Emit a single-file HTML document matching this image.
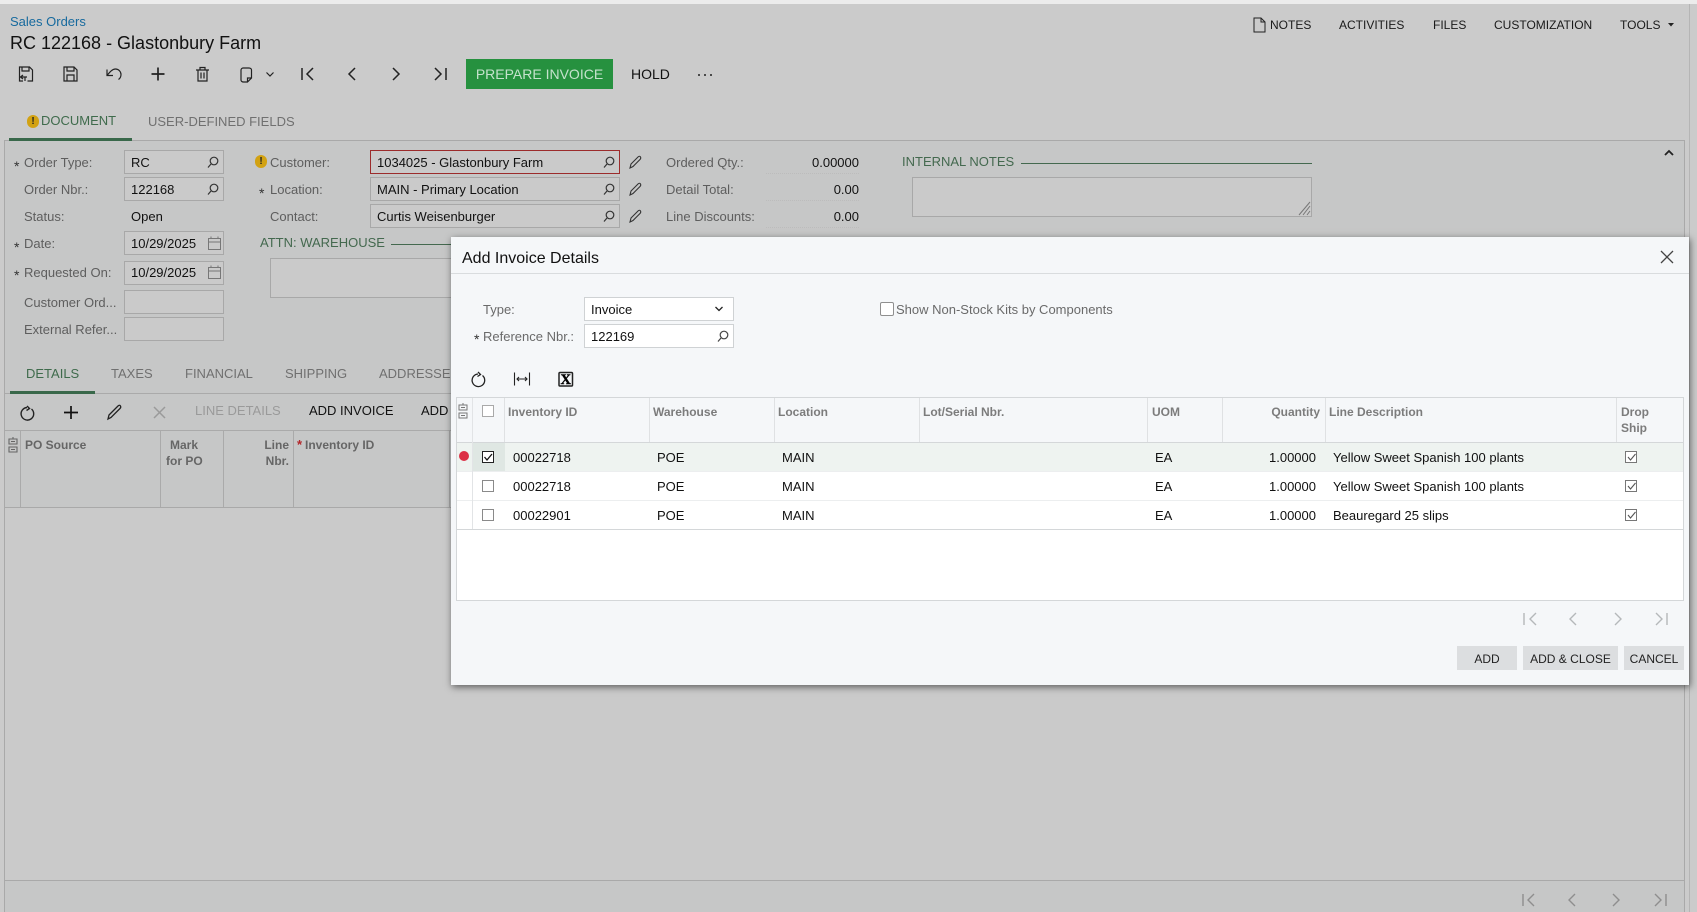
<!DOCTYPE html>
<html><head><meta charset="utf-8"><title>Sales Orders</title>
<style>
html,body{margin:0;padding:0;width:1697px;height:912px;overflow:hidden;background:#cbcbcb;font-family:"Liberation Sans",Arial,sans-serif;font-size:13px;color:#111}
.a{position:absolute;box-sizing:border-box}
.t{position:absolute;white-space:nowrap;line-height:16px}
.l{color:#5e5e5e}
.s{color:#333;font-size:14px}
.g{color:#44694f}
.n{color:#707070;font-size:13px}
.f{position:absolute;box-sizing:border-box;background:#cacaca;border:1px solid #a8a8a8}
.h{font-weight:bold;color:#666;font-size:12px}
.m{font-weight:bold;color:#7c7c7c;font-size:12px}
.tb{font-size:13px;color:#111}
.top{font-size:12px;color:#1a1a1a}
.v{color:#111}
.b{position:absolute;background:#dcdee0;top:646px;height:24px;line-height:26px;text-align:center;font-size:12px;color:#222}
svg{position:absolute;left:0;top:0;overflow:visible}
</style></head><body>
<div class="a" style="left:0;top:0;width:1697px;height:4px;background:#ececec"></div>
<div class="a" style="left:1689px;top:4px;width:1px;height:908px;background:#b5b5b5"></div>
<div class="a" style="left:4px;top:140px;width:1681px;height:772px;background:#c6c7c7;border-left:1px solid #a9a9a9;border-right:1px solid #a9a9a9;border-top:1px solid #a9a9a9"></div>
<div class="a" style="left:5px;top:507px;width:1679px;height:374px;background:#cacaca;border-top:1px solid #a9a9a9;border-bottom:1px solid #a9a9a9"></div>

<div class="t" style="left:10px;top:14px;color:#176a9e;font-size:13px">Sales Orders</div>
<div class="t" style="left:10px;top:33px;font-size:18px;line-height:20px;color:#111">RC 122168 - Glastonbury Farm</div>
<div class="a" style="left:466px;top:59px;width:147px;height:30px;background:#26913f;color:#c4e2cc;font-size:14px;line-height:30px;text-align:center">PREPARE INVOICE</div>
<div class="t" style="left:631px;top:66px;font-size:14px;color:#111">HOLD</div>

<div class="t top" style="left:1270px;top:17px">NOTES</div>
<div class="t top" style="left:1339px;top:17px">ACTIVITIES</div>
<div class="t top" style="left:1433px;top:17px">FILES</div>
<div class="t top" style="left:1494px;top:17px">CUSTOMIZATION</div>
<div class="t top" style="left:1620px;top:17px">TOOLS</div>

<div class="a" style="left:27px;top:115px;width:12px;height:13px;border-radius:6px;background:#d2a213;color:#222;font:bold 10px/13px 'Liberation Sans',sans-serif;text-align:center">!</div>
<div class="t" style="left:41px;top:113px;font-size:13px;color:#3f6b4c">DOCUMENT</div>
<div class="t n" style="left:148px;top:114px">USER-DEFINED FIELDS</div>
<div class="a" style="left:9px;top:138px;width:123px;height:3px;background:#39684a"></div>

<!-- form left -->
<div class="t l" style="left:24px;top:155px">Order Type:</div>
<div class="t l" style="left:24px;top:182px">Order Nbr.:</div>
<div class="t l" style="left:24px;top:209px">Status:</div>
<div class="t l" style="left:24px;top:236px">Date:</div>
<div class="t l" style="left:24px;top:265px">Requested On:</div>
<div class="t l" style="left:24px;top:295px">Customer Ord...</div>
<div class="t l" style="left:24px;top:322px">External Refer...</div>
<div class="t s" style="left:14px;top:158px">*</div>
<div class="t s" style="left:14px;top:239px">*</div>
<div class="t s" style="left:14px;top:267px">*</div>
<div class="f" style="left:124px;top:150px;width:100px;height:24px"></div>
<div class="f" style="left:124px;top:177px;width:100px;height:24px"></div>
<div class="f" style="left:124px;top:231px;width:100px;height:24px"></div>
<div class="f" style="left:124px;top:261px;width:100px;height:24px"></div>
<div class="f" style="left:124px;top:290px;width:100px;height:24px"></div>
<div class="f" style="left:124px;top:317px;width:100px;height:24px"></div>
<div class="t v" style="left:131px;top:155px">RC</div>
<div class="t v" style="left:131px;top:182px">122168</div>
<div class="t v" style="left:131px;top:209px">Open</div>
<div class="t v" style="left:131px;top:236px">10/29/2025</div>
<div class="t v" style="left:131px;top:265px">10/29/2025</div>

<!-- form middle -->
<div class="a" style="left:255px;top:155px;width:12px;height:13px;border-radius:6px;background:#d2a213;color:#222;font:bold 10px/13px 'Liberation Sans',sans-serif;text-align:center">!</div>
<div class="t l" style="left:270px;top:155px">Customer:</div>
<div class="t l" style="left:270px;top:182px">Location:</div>
<div class="t l" style="left:270px;top:209px">Contact:</div>
<div class="t s" style="left:259px;top:185px">*</div>
<div class="f" style="left:370px;top:150px;width:250px;height:24px;border-color:#9c2b2b"></div>
<div class="f" style="left:370px;top:177px;width:250px;height:24px"></div>
<div class="f" style="left:370px;top:204px;width:250px;height:24px"></div>
<div class="t v" style="left:377px;top:155px">1034025 - Glastonbury Farm</div>
<div class="t v" style="left:377px;top:182px">MAIN - Primary Location</div>
<div class="t v" style="left:377px;top:209px">Curtis Weisenburger</div>
<div class="t g" style="left:260px;top:235px;font-size:13px">ATTN: WAREHOUSE</div>
<div class="a" style="left:391px;top:244px;width:60px;height:1px;background:#44694f"></div>
<div class="f" style="left:270px;top:258px;width:190px;height:40px"></div>

<!-- totals -->
<div class="t l" style="left:666px;top:155px">Ordered Qty.:</div>
<div class="t l" style="left:666px;top:182px">Detail Total:</div>
<div class="t l" style="left:666px;top:209px">Line Discounts:</div>
<div class="t v" style="right:838px;top:155px">0.00000</div>
<div class="t v" style="right:838px;top:182px">0.00</div>
<div class="t v" style="right:838px;top:209px">0.00</div>
<div class="a" style="left:766px;top:173px;width:93px;border-top:1px dotted #bcbcbc"></div>
<div class="a" style="left:766px;top:200px;width:93px;border-top:1px dotted #bcbcbc"></div>
<div class="a" style="left:766px;top:227px;width:93px;border-top:1px dotted #bcbcbc"></div>

<div class="t g" style="left:902px;top:154px;font-size:13px">INTERNAL NOTES</div>
<div class="a" style="left:1021px;top:163px;width:291px;height:1px;background:#44694f"></div>
<div class="f" style="left:912px;top:177px;width:400px;height:40px"></div>

<!-- lower tabs -->
<div class="t" style="left:26px;top:366px;font-size:13px;color:#3f6b4c">DETAILS</div>
<div class="t n" style="left:111px;top:366px">TAXES</div>
<div class="t n" style="left:185px;top:366px">FINANCIAL</div>
<div class="t n" style="left:285px;top:366px">SHIPPING</div>
<div class="t n" style="left:379px;top:366px">ADDRESSES</div>
<div class="a" style="left:5px;top:393px;width:1679px;height:1px;background:#aaa"></div>
<div class="a" style="left:10px;top:391px;width:85px;height:3px;background:#39684a"></div>
<div class="t" style="left:195px;top:403px;font-size:13px;color:#9a9a9a">LINE DETAILS</div>
<div class="t tb" style="left:309px;top:403px">ADD INVOICE</div>
<div class="t tb" style="left:421px;top:403px">ADD</div>

<!-- back grid -->
<div class="a" style="left:5px;top:430px;width:1679px;height:1px;background:#aaa"></div>
<div class="a" style="left:20px;top:430px;width:1px;height:77px;background:#aaa"></div>
<div class="a" style="left:160px;top:430px;width:1px;height:77px;background:#aaa"></div>
<div class="a" style="left:223px;top:430px;width:1px;height:77px;background:#aaa"></div>
<div class="a" style="left:293px;top:430px;width:1px;height:77px;background:#aaa"></div>
<div class="a" style="left:449px;top:430px;width:1px;height:77px;background:#aaa"></div>
<div class="t h" style="left:25px;top:437px">PO Source</div>
<div class="t h" style="left:170px;top:437px">Mark</div>
<div class="t h" style="left:166px;top:453px">for PO</div>
<div class="t h" style="right:1408px;top:437px">Line</div>
<div class="t h" style="right:1408px;top:453px">Nbr.</div>
<div class="t" style="left:297px;top:437px;font-size:13px;color:#b3262a;font-weight:bold">*</div>
<div class="t h" style="left:305px;top:437px">Inventory ID</div>

<!-- background icons -->
<svg width="1697" height="912" fill="none" stroke="#222" stroke-width="1.2">
 <g>
  <path d="M23 81h-3.500V67h10l3 3v11h-5M22 67v4h7v-4M27 77h-6M23 75l-2.500 2 2.500 2M25 77v4"/>
  <path d="M64 67h10l3 3v11H64zM67 67v4h7v-4M67 81v-6h7v6"/>
  <path d="M107 69.500v6h6M107 75.500c2.500-3 5-6.500 8.500-6.500 3 0 5.500 2.500 5.500 5.500 0 2-1 4-2.500 5"/>
  <path d="M158 67.500v13M151.500 74h13" stroke-width="1.700"/>
  <path d="M196 70h13M200 70v-2.500h5V70M198 70v11h9V70M201 72.500v6M204 72.500v6"/>
  <path d="M243 68h6c1.500 0 2.500 1 2.500 2v8l-4 4h-4c-1.500 0-2.500-1-2.500-2V70c0-1 1-2 2-2zM247.500 82v-4h4"/>
  <path d="M266.500 72.500l3.500 3.500 3.500-3.500"/>
  <path d="M302 68v12M313 68l-6 6 6 6" stroke-width="1.500"/>
  <path d="M355 68l-6 6 6 6" stroke-width="1.500"/>
  <path d="M393 68l6 6-6 6" stroke-width="1.500"/>
  <path d="M435 68l6 6-6 6M446 68v12" stroke-width="1.500"/>
 </g>
 <g fill="#222" stroke="none"><circle cx="699" cy="75" r="1"/><circle cx="705" cy="75" r="1"/><circle cx="711" cy="75" r="1"/></g>
 <path d="M1254 18h7l4 4v10h-11zM1261 18v4h4" stroke="#222" stroke-width="1"/>
 <path d="M1668 23h6l-3 3.500z" fill="#222" stroke="none"/>
 <path d="M1665 155l4-4 4 4" stroke="#222" stroke-width="1.800"/>
 <!-- magnifiers -->
 <g stroke="#333" stroke-width="1.200">
  <circle cx="214" cy="161" r="3.800"/><path d="M211 164l-3 3.500"/>
  <circle cx="214" cy="188" r="3.800"/><path d="M211 191l-3 3.500"/>
  <circle cx="610" cy="161" r="3.800"/><path d="M607 164l-3 3.500"/>
  <circle cx="610" cy="188" r="3.800"/><path d="M607 191l-3 3.500"/>
  <circle cx="610" cy="215" r="3.800"/><path d="M607 218l-3 3.500"/>
 </g>
 <!-- pencils -->
 <g stroke="#333" stroke-width="1.100">
  <path d="M630 168l1-4 7-7c1-1 2-1 2.500 0s.5 1.500-.5 2.500l-7 7z"/>
  <path d="M630 195l1-4 7-7c1-1 2-1 2.500 0s.5 1.500-.5 2.500l-7 7z"/>
  <path d="M630 222l1-4 7-7c1-1 2-1 2.500 0s.5 1.500-.5 2.500l-7 7z"/>
  <path d="M108 419l1-4 9-9c1-1 2-1 2.500 0s.5 1.500-.5 2.500l-9 9z" stroke="#222" stroke-width="1.300"/>
 </g>
 <!-- calendars -->
 <g stroke="#777" stroke-width="1">
  <path d="M208.500 238.500h12v11h-12zM208.500 242h12M211 236.500v2M218 236.500v2"/>
  <path d="M208.500 267.500h12v11h-12zM208.500 271h12M211 265.500v2M218 265.500v2"/>
 </g>
 <path d="M1299 215l11-13M1303 215l7-9M1307 215l3-4" stroke="#777" stroke-width="1"/>
 <!-- lower toolbar -->
 <path d="M27 406l2.500 2.500-3 2M31.500 409a6.300 6.300 0 1 1-4.500-1.500" stroke="#222" stroke-width="1.400"/>
 <path d="M71 406v13M64 412.500h14" stroke="#111" stroke-width="1.700"/>
 <path d="M154 407l11 11M165 407l-11 11" stroke="#9a9a9a" stroke-width="1.500"/>
 <path d="M9 439h8v5H9zM9 447h8v5H9zM13 437v2M11 441.500h4M11 449.500h4" stroke="#666" stroke-width="1.100"/>
 <!-- bottom pager -->
 <g stroke="#8e8e8e" stroke-width="1.400">
  <path d="M1523 894v12M1534 894l-6 6 6 6"/><path d="M1575 894l-6 6 6 6"/><path d="M1613 894l6 6-6 6"/><path d="M1655 894l6 6-6 6M1666 894v12"/>
 </g>
</svg>

<!-- MODAL -->
<div class="a" style="left:451px;top:237px;width:1238px;height:448px;background:#f5f7f9;box-shadow:1px 2px 7px rgba(0,0,0,.55)"></div>
<div class="a" style="left:451px;top:273px;width:1238px;height:1px;background:#d9dcde"></div>
<div class="t" style="left:462px;top:251px;font-size:16px;color:#111">Add Invoice Details</div>
<div class="t" style="left:483px;top:302px;color:#6a6a6a">Type:</div>
<div class="t" style="left:483px;top:329px;color:#6a6a6a">Reference Nbr.:</div>
<div class="t s" style="left:474px;top:331px">*</div>
<div class="a" style="left:584px;top:297px;width:150px;height:24px;background:#fff;border:1px solid #cfd2d4"></div>
<div class="a" style="left:584px;top:324px;width:150px;height:24px;background:#fff;border:1px solid #cfd2d4"></div>
<div class="t v" style="left:591px;top:302px">Invoice</div>
<div class="t v" style="left:591px;top:329px">122169</div>
<div class="a" style="left:880px;top:302px;width:14px;height:14px;background:#fff;border:1px solid #8f8f8f;border-radius:2px"></div>
<div class="t" style="left:896px;top:302px;color:#6a6a6a">Show Non-Stock Kits by Components</div>

<!-- modal grid -->
<div class="a" style="left:456px;top:397px;width:1228px;height:204px;background:#fff;border:1px solid #d4d7d9"></div>
<div class="a" style="left:457px;top:398px;width:1226px;height:45px;background:#f5f7f9;border-bottom:1px solid #d4d7d9"></div>
<div class="a" style="left:457px;top:443px;width:1226px;height:29px;background:#eef3f0"></div>
<div class="a" style="left:473px;top:443px;width:32px;height:29px;background:#dfe7e3"></div>
<div class="a" style="left:457px;top:500px;width:1226px;height:1px;background:#eceeef"></div>
<div class="a" style="left:457px;top:471px;width:1226px;height:1px;background:#eceeef"></div>
<div class="a" style="left:457px;top:529px;width:1226px;height:1px;background:#d4d7d9"></div>
<div class="a" style="left:472px;top:398px;width:1px;height:131px;background:#e2e4e6"></div>
<div class="a" style="left:504px;top:398px;width:1px;height:44px;background:#dfe1e3"></div>
<div class="a" style="left:649px;top:398px;width:1px;height:44px;background:#dfe1e3"></div>
<div class="a" style="left:774px;top:398px;width:1px;height:44px;background:#dfe1e3"></div>
<div class="a" style="left:919px;top:398px;width:1px;height:44px;background:#dfe1e3"></div>
<div class="a" style="left:1147px;top:398px;width:1px;height:44px;background:#dfe1e3"></div>
<div class="a" style="left:1222px;top:398px;width:1px;height:44px;background:#dfe1e3"></div>
<div class="a" style="left:1325px;top:398px;width:1px;height:44px;background:#dfe1e3"></div>
<div class="a" style="left:1616px;top:398px;width:1px;height:44px;background:#dfe1e3"></div>
<div class="t m" style="left:508px;top:404px">Inventory ID</div>
<div class="t m" style="left:653px;top:404px">Warehouse</div>
<div class="t m" style="left:778px;top:404px">Location</div>
<div class="t m" style="left:923px;top:404px">Lot/Serial Nbr.</div>
<div class="t m" style="left:1152px;top:404px">UOM</div>
<div class="t m" style="right:377px;top:404px">Quantity</div>
<div class="t m" style="left:1329px;top:404px">Line Description</div>
<div class="t m" style="left:1621px;top:404px">Drop</div>
<div class="t m" style="left:1621px;top:420px">Ship</div>
<div class="a" style="left:482px;top:405px;width:12px;height:12px;background:#fff;border:1px solid #a9a9a9"></div>
<div class="a" style="left:482px;top:451px;width:12px;height:12px;background:#fff;border:1px solid #222"></div>
<div class="a" style="left:482px;top:480px;width:12px;height:12px;background:#fff;border:1px solid #8a8a8a"></div>
<div class="a" style="left:482px;top:509px;width:12px;height:12px;background:#fff;border:1px solid #8a8a8a"></div>
<div class="a" style="left:1625px;top:451px;width:12px;height:12px;background:#fff;border:1px solid #777"></div>
<div class="a" style="left:1625px;top:480px;width:12px;height:12px;background:#fff;border:1px solid #777"></div>
<div class="a" style="left:1625px;top:509px;width:12px;height:12px;background:#fff;border:1px solid #777"></div>
<div class="a" style="left:459px;top:451px;width:10px;height:10px;border-radius:5px;background:#dc2f45"></div>

<div class="t v" style="left:513px;top:450px">00022718</div><div class="t v" style="left:657px;top:450px">POE</div><div class="t v" style="left:782px;top:450px">MAIN</div><div class="t v" style="left:1155px;top:450px">EA</div><div class="t v" style="right:381px;top:450px">1.00000</div><div class="t v" style="left:1333px;top:450px">Yellow Sweet Spanish 100 plants</div>
<div class="t v" style="left:513px;top:479px">00022718</div><div class="t v" style="left:657px;top:479px">POE</div><div class="t v" style="left:782px;top:479px">MAIN</div><div class="t v" style="left:1155px;top:479px">EA</div><div class="t v" style="right:381px;top:479px">1.00000</div><div class="t v" style="left:1333px;top:479px">Yellow Sweet Spanish 100 plants</div>
<div class="t v" style="left:513px;top:508px">00022901</div><div class="t v" style="left:657px;top:508px">POE</div><div class="t v" style="left:782px;top:508px">MAIN</div><div class="t v" style="left:1155px;top:508px">EA</div><div class="t v" style="right:381px;top:508px">1.00000</div><div class="t v" style="left:1333px;top:508px">Beauregard 25 slips</div>

<div class="b" style="left:1457px;width:60px">ADD</div>
<div class="b" style="left:1523px;width:95px">ADD &amp; CLOSE</div>
<div class="b" style="left:1624px;width:60px">CANCEL</div>

<!-- modal icons -->
<svg width="1697" height="912" fill="none" stroke="#222" stroke-width="1.200">
 <path d="M1661 251l12 12M1673 251l-12 12" stroke="#444" stroke-width="1.300"/>
 <path d="M715.500 307l3.500 3.500 3.500-3.500" stroke-width="1.300"/>
 <circle cx="724" cy="335" r="3.800" stroke="#444"/><path d="M721 338l-3 3.500" stroke="#444"/>
 <path d="M478 372l2.500 2.500-3 2M482.500 375.500a6.300 6.300 0 1 1-4.500-1.500" stroke-width="1.300"/>
 <path d="M514.500 372.500v13M529.500 372.500v13M517 379h10M519 377l-2 2 2 2M525 377l2 2-2 2" stroke-width="1.100"/>
 <rect x="559" y="372.500" width="13.500" height="13.500" rx="1" stroke-width="1.500"/>
 <text x="565.800" y="384.200" text-anchor="middle" font-family="Liberation Serif, serif" font-weight="bold" font-size="14.500" fill="#000" stroke="#000" stroke-width=".4">X</text>
 <path d="M459 405h8v5h-8zM459 413h8v5h-8zM463 403v2M461 407.500h4M461 415.500h4" stroke="#777" stroke-width="1"/>
 <path d="M484.500 457l2.500 3 5-6" stroke="#111" stroke-width="1.300"/>
 <g stroke="#555" stroke-width="1.100">
  <path d="M1628 457l2.500 3 5-6"/><path d="M1628 486l2.500 3 5-6"/><path d="M1628 515l2.500 3 5-6"/>
 </g>
 <g stroke="#b5b8ba" stroke-width="1.400">
  <path d="M1524 613v12M1536 613l-6 6 6 6"/><path d="M1576 613l-6 6 6 6"/><path d="M1615 613l6 6-6 6"/><path d="M1656 613l6 6-6 6M1667 613v12"/>
 </g>
</svg>
</body></html>
